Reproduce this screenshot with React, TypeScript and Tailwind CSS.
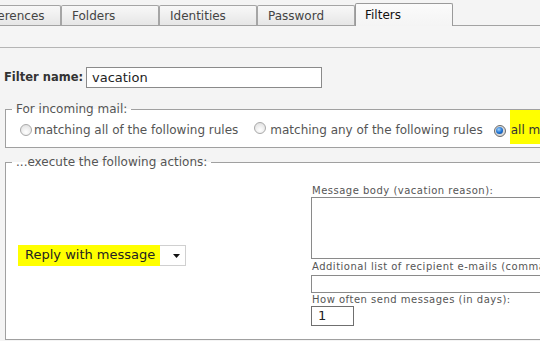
import React from "react";

function Radio({ checked }: { checked?: boolean }) {
  if (checked) {
    return (
      <span className="inline-flex w-[12px] h-[12px] rounded-full border border-[#6b6b6b] bg-[#d9d9d9] items-center justify-center shrink-0">
        <span className="w-[7px] h-[7px] rounded-full bg-[radial-gradient(circle_at_40%_35%,#9fd3ff,#1a6fd0_55%,#0b3f86)]" />
      </span>
    );
  }
  return (
    <span className="inline-block w-[12px] h-[12px] rounded-full border border-[#a9a9a9] bg-[radial-gradient(circle_at_50%_70%,#ffffff,#dcdcdc)] shrink-0" />
  );
}

function Tab({ label, active, className = "" }: { label: string; active?: boolean; className?: string }) {
  if (active) {
    return (
      <div
        className={
          "relative z-10 h-[23px] -mb-[1px] w-[98px] border border-b-0 border-[#9a9a9a] rounded-t-[2px] bg-gradient-to-b from-[#fbfbfb] to-[#f4f4f4] flex items-center pl-[9px] text-[#111] " +
          className
        }
      >
        {label}
      </div>
    );
  }
  return (
    <div
      className={
        "h-[20px] w-[98px] border border-b-0 border-[#a5a5a5] rounded-t-[2px] bg-gradient-to-b from-[#f8f8f8] to-[#e6e6e6] flex items-center pl-[10px] text-[#444] shrink-0 " +
        className
      }
    >
      {label}
    </div>
  );
}

export default function App() {
  return (
    <div className="w-[540px] h-[341px] overflow-hidden bg-[#f4f4f4] font-['DejaVu_Sans',Verdana,sans-serif] text-[12px] text-[#555]">
      {/* tabs */}
      <div className="h-[26px] border-b border-[#a3a3a3] flex items-end">
        <Tab label="Preferences" className="-ml-[37px]" />
        <Tab label="Folders" />
        <Tab label="Identities" />
        <Tab label="Password" />
        <Tab label="Filters" active />
      </div>
      {/* toolbar strip */}
      <div className="h-[22px] border-b border-[#b5b5b5] bg-[#f5f5f5]" />

      {/* content */}
      <div className="pt-[19px]">
        <div className="flex items-center h-[21px]">
          <span className="ml-[4px] font-bold text-[11.5px] text-[#333] w-[82px] shrink-0 whitespace-nowrap">Filter name:</span>
          <div className="w-[236px] h-[21px] border border-[#8a8a8a] bg-white flex items-center pl-[5px] text-[13px] text-[#222]">
            vacation
          </div>
        </div>

        <fieldset className="ml-[5px] mt-[14px] w-[620px] border border-[#a0a0a0] bg-white pt-[7px] pb-[10px]">
          <legend className="ml-[6px] px-[4px] leading-[14px] text-[#555]">For incoming mail:</legend>
          <div className="flex items-center h-[14px] whitespace-nowrap pl-[14px]">
            <Radio />
            <span className="ml-[2px]">matching all of the following rules</span>
            <span className="ml-[16px]"><Radio /></span>
            <span className="ml-[4px]">matching any of the following rules</span>
            <span className="ml-[11px]"><Radio checked /></span>
            <span className="relative ml-[4px] pl-[1px] text-[#333]">
              <span className="absolute left-0 -top-[11px] -bottom-[5px] w-[60px] bg-[#ffff00]" />
              <span className="relative">all messages</span>
            </span>
          </div>
        </fieldset>

        <fieldset className="ml-[5px] mt-[7px] w-[620px] border border-[#a0a0a0] bg-white pt-[15px] pb-[13px]">
          <legend className="ml-[6px] px-[4px] leading-[14px] text-[#555]">...execute the following actions:</legend>
          <div className="flex items-center">
            <div className="w-[305px] pl-[12px]">
              <div className="relative w-[168px] h-[21px] border border-[#d0d0d0] bg-white flex items-center">
                <span className="absolute -left-[1px] -top-[1px] -bottom-[1px] w-[142px] bg-[#ffff00]" />
                <span className="relative pl-[6px] text-[13px] text-[#222]">Reply with message</span>
                <svg className="absolute right-[5px] top-[8px]" width="7" height="4" viewBox="0 0 7 4">
                  <path d="M0 0H7L3.5 4Z" fill="#111" />
                </svg>
              </div>
            </div>
            <div className="flex flex-col text-[10px] tracking-[0.5px] text-[#555]">
              <div className="h-[13px] leading-[13px] pl-[1px]">Message body (vacation reason):</div>
              <div className="w-[300px] h-[62px] border border-[#8a8a8a] bg-white" />
              <div className="h-[16px] leading-[16px] pl-[1px] whitespace-nowrap">Additional list of recipient e-mails (comma separated):</div>
              <div className="w-[300px] h-[18px] border border-[#8a8a8a] bg-white" />
              <div className="h-[13px] leading-[13px] pl-[1px]">How often send messages (in days):</div>
              <div className="w-[43px] h-[20px] border border-[#6f6f6f] bg-white flex items-center pl-[6px] text-[13px] tracking-normal text-[#222]">1</div>
            </div>
          </div>
        </fieldset>
      </div>
    </div>
  );
}
